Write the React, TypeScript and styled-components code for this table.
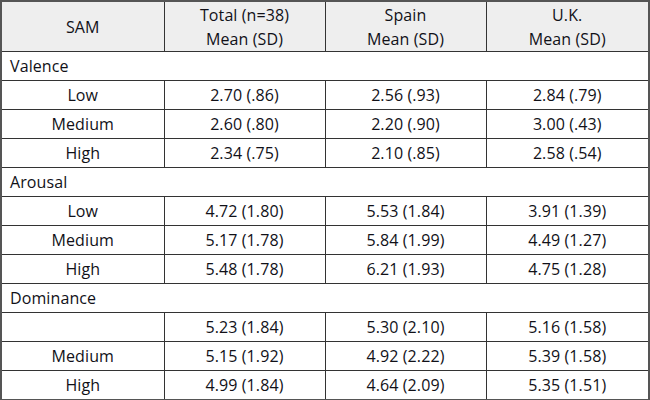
import React from "react";
import styled, { createGlobalStyle } from "styled-components";

const Global = createGlobalStyle`
  html, body { margin: 0; padding: 0; background: #ffffff; }
  body { font-family: "Open Sans", "Noto Sans", sans-serif; color: #111118; }
`;

const Table = styled.table`
  border-collapse: collapse;
  width: 648px;
  table-layout: fixed;
  border: 2px solid #555;
  font-size: 16px;
  letter-spacing: 0.1px;
`;

const HeadCell = styled.th`
  background: #eeeeee;
  font-weight: 400;
  text-align: center;
  height: 49px;
  padding: 0;
  line-height: 24px;
  border: 1px solid #333;
`;

const GroupCell = styled.td`
  text-align: left;
  padding: 0 0 0 8px;
  height: 28px;
  border: 1px solid #333;
`;

const Cell = styled.td`
  text-align: center;
  padding: 0;
  height: 28px;
  border: 1px solid #333;
`;

type Row = { label: string; values: [string, string, string] };
type Group = { name: string; rows: Row[] };

const groups: Group[] = [
  {
    name: "Valence",
    rows: [
      { label: "Low", values: ["2.70 (.86)", "2.56 (.93)", "2.84 (.79)"] },
      { label: "Medium", values: ["2.60 (.80)", "2.20 (.90)", "3.00 (.43)"] },
      { label: "High", values: ["2.34 (.75)", "2.10 (.85)", "2.58 (.54)"] },
    ],
  },
  {
    name: "Arousal",
    rows: [
      { label: "Low", values: ["4.72 (1.80)", "5.53 (1.84)", "3.91 (1.39)"] },
      { label: "Medium", values: ["5.17 (1.78)", "5.84 (1.99)", "4.49 (1.27)"] },
      { label: "High", values: ["5.48 (1.78)", "6.21 (1.93)", "4.75 (1.28)"] },
    ],
  },
  {
    name: "Dominance",
    rows: [
      { label: "", values: ["5.23 (1.84)", "5.30 (2.10)", "5.16 (1.58)"] },
      { label: "Medium", values: ["5.15 (1.92)", "4.92 (2.22)", "5.39 (1.58)"] },
      { label: "High", values: ["4.99 (1.84)", "4.64 (2.09)", "5.35 (1.51)"] },
    ],
  },
];

export default function App() {
  return (
    <>
      <Global />
      <Table>
        <colgroup>
          <col style={{ width: 163 }} />
          <col style={{ width: 161 }} />
          <col style={{ width: 161 }} />
          <col style={{ width: 163 }} />
        </colgroup>
        <thead>
          <tr>
            <HeadCell>SAM</HeadCell>
            <HeadCell>
              Total (n=38)
              <br />
              Mean (SD)
            </HeadCell>
            <HeadCell>
              Spain
              <br />
              Mean (SD)
            </HeadCell>
            <HeadCell>
              U.K.
              <br />
              Mean (SD)
            </HeadCell>
          </tr>
        </thead>
        <tbody>
          {groups.map((g) => (
            <React.Fragment key={g.name}>
              <tr>
                <GroupCell colSpan={4}>{g.name}</GroupCell>
              </tr>
              {g.rows.map((r, i) => (
                <tr key={i}>
                  <Cell>{r.label}</Cell>
                  {r.values.map((v, j) => (
                    <Cell key={j}>{v}</Cell>
                  ))}
                </tr>
              ))}
            </React.Fragment>
          ))}
        </tbody>
      </Table>
    </>
  );
}
